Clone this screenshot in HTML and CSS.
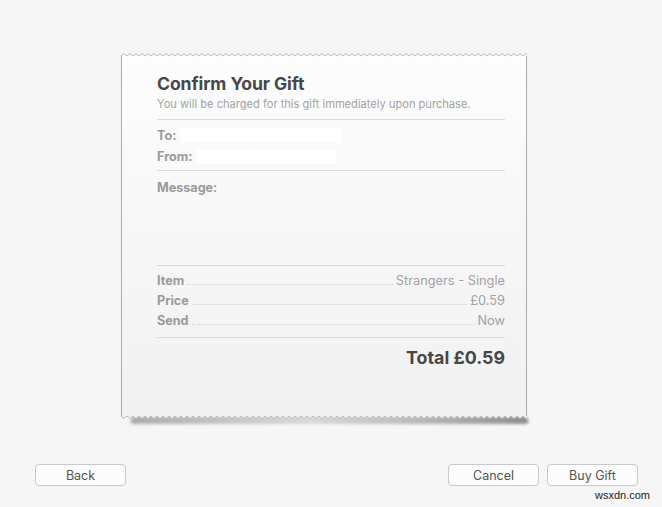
FILE: index.html
```html
<!DOCTYPE html>
<html>
<head>
<meta charset="utf-8">
<link rel="stylesheet" href="styles.css">
</head>
<body>
<div class="page">
  <div class="receipt-wrap">
    <svg class="zig zig-top" width="406" height="6" viewBox="0 0 406 6">
      <defs>
        <pattern id="zt" width="6" height="6" patternUnits="userSpaceOnUse">
          <polyline points="0,4 3,1.5 6,4" fill="none" stroke="#b5b5b5" stroke-width="0.9"/>
        </pattern>
      </defs>
      <polygon points="0,4 406,4 406,6 0,6" fill="#fdfdfd"/>
      <rect x="0" y="0" width="406" height="6" fill="url(#zt)"/>
      <line x1="0.5" y1="4" x2="0.5" y2="6" stroke="#aaa"/>
      <line x1="405.5" y1="4" x2="405.5" y2="6" stroke="#aaa"/>
    </svg>
    <div class="receipt">
      <h1 class="title">Confirm Your Gift</h1>
      <p class="subtitle">You will be charged for this gift immediately upon purchase.</p>
      <div class="rule"></div>
      <div class="field field-first"><span class="label">To:</span><span class="blank blank-to"></span></div>
      <div class="field"><span class="label">From:</span><span class="blank blank-from"></span></div>
      <div class="rule rule-b"></div>
      <div class="message"><span class="label">Message:</span></div>
      <div class="rule"></div>
      <div class="lines">
        <div class="line"><span class="label">Item</span><span class="dots"></span><span class="val">Strangers - Single</span></div>
        <div class="line"><span class="label">Price</span><span class="dots"></span><span class="val">£0.59</span></div>
        <div class="line"><span class="label">Send</span><span class="dots"></span><span class="val">Now</span></div>
      </div>
      <div class="rule"></div>
      <div class="total">Total £0.59</div>
    </div>
    <div class="bottom">
      <svg class="shadow" width="420" height="20" viewBox="0 0 420 20">
        <defs>
          <filter id="bl" x="-10%" y="-100%" width="120%" height="300%">
            <feGaussianBlur stdDeviation="1.6"/>
          </filter>
          <linearGradient id="sg" x1="0" x2="1" y1="0" y2="0">
            <stop offset="0" stop-color="#8a8a8a" stop-opacity="0.7"/>
            <stop offset="0.45" stop-color="#aaa" stop-opacity="0.4"/>
            <stop offset="1" stop-color="#7a7a7a" stop-opacity="0.85"/>
          </linearGradient>
        </defs>
        <path filter="url(#bl)" fill="url(#sg)" d="M12,4 L405,4 L408,10 L405,12 L12,12 L9,10 Z"/>
      </svg>
      <svg class="zig zig-bottom" width="406" height="7" viewBox="0 0 406 7">
        <defs>
          <pattern id="zb" width="6" height="7" patternUnits="userSpaceOnUse">
            <polygon points="0,0 6,0 6,3 3,5.5 0,3" fill="#f1f1f1"/>
            <polyline points="0,3 3,5.5 6,3" fill="none" stroke="#b5b5b5" stroke-width="0.9"/>
          </pattern>
        </defs>
        <rect x="0" y="0" width="406" height="7" fill="url(#zb)"/>
        <line x1="0.5" y1="0" x2="0.5" y2="3" stroke="#aaa"/>
        <line x1="405.5" y1="0" x2="405.5" y2="3" stroke="#aaa"/>
      </svg>
    </div>
  </div>
  <div class="buttons">
    <button class="btn">Back</button>
    <div class="spacer"></div>
    <button class="btn">Cancel</button>
    <button class="btn">Buy Gift</button>
  </div>
  <div class="watermark">wsxdn.com</div>
</div>
</body>
</html>
```
FILE: styles.css
```css
* { box-sizing: border-box; }
html, body {
  margin: 0;
  padding: 0;
  background: #f6f6f6;
  font-family: Inter, "Liberation Sans", sans-serif;
}
.page {
  width: 662px;
  height: 507px;
  display: flex;
  flex-direction: column;
  position: relative;
  overflow: hidden;
}
.receipt-wrap {
  margin: 52px 0 0 121px;
  width: 406px;
  display: flex;
  flex-direction: column;
}
.zig { display: block; }
.receipt {
  border-left: 1px solid #aaa;
  border-right: 1px solid #aaa;
  background: linear-gradient(#fdfdfd, #f1f1f1);
  padding: 15px 21px 0 35px;
  height: 355px;
}
.title {
  margin: 0;
  font-size: 17.6px;
  font-weight: 700;
  color: #474747;
  letter-spacing: -0.1px;
  line-height: 21px;
}
.subtitle {
  margin: 3px 0 8px;
  font-size: 11.1px;
  color: #a3a3a3;
  line-height: 14px;
}
.rule {
  height: 1px;
  background: #dadada;
}
.field {
  display: flex;
  align-items: center;
  height: 21px;
}
.field-first { margin-top: 5px; }
.label {
  font-weight: 700;
  color: #9a9a9a;
  font-size: 12.6px;
}
.blank {
  height: 15px;
  background: #fff;
  margin-left: 4px;
}
.blank-to { width: 162px; }
.blank-from { width: 140px; }
.rule-b { margin-top: 3px; }
.message {
  height: 94px;
  padding-top: 8px;
  line-height: 15px;
}
.lines { padding: 7px 0 4px; }
.line {
  display: flex;
  align-items: baseline;
  height: 20px;
}
.dots {
  flex: 1;
  border-bottom: 1px dotted #d0d0d0;
  margin: 0 3px;
}
.val {
  color: #a3a3a3;
  font-size: 12.8px;
}
.total {
  text-align: right;
  font-size: 17.8px;
  font-weight: 700;
  color: #474747;
  padding-top: 9px;
}
.bottom {
  position: relative;
  height: 7px;
}
.shadow {
  position: absolute;
  left: 0;
  top: -1px;
}
.zig-bottom { position: relative; }
.buttons {
  display: flex;
  margin: 44px 0 0 35px;
  width: 603px;
  gap: 8px;
}
.spacer { flex: 1; }
.btn {
  width: 91px;
  height: 22px;
  border: 1px solid #c9c9c9;
  border-radius: 4px;
  background: #fcfcfc;
  font-family: Inter, "Liberation Sans", sans-serif;
  font-size: 12.5px;
  color: #555;
  padding: 0;
}
.watermark {
  position: absolute;
  right: 12px;
  bottom: 6px;
  font-size: 11px;
  color: #222;
  font-family: "Liberation Sans", sans-serif;
}
```
